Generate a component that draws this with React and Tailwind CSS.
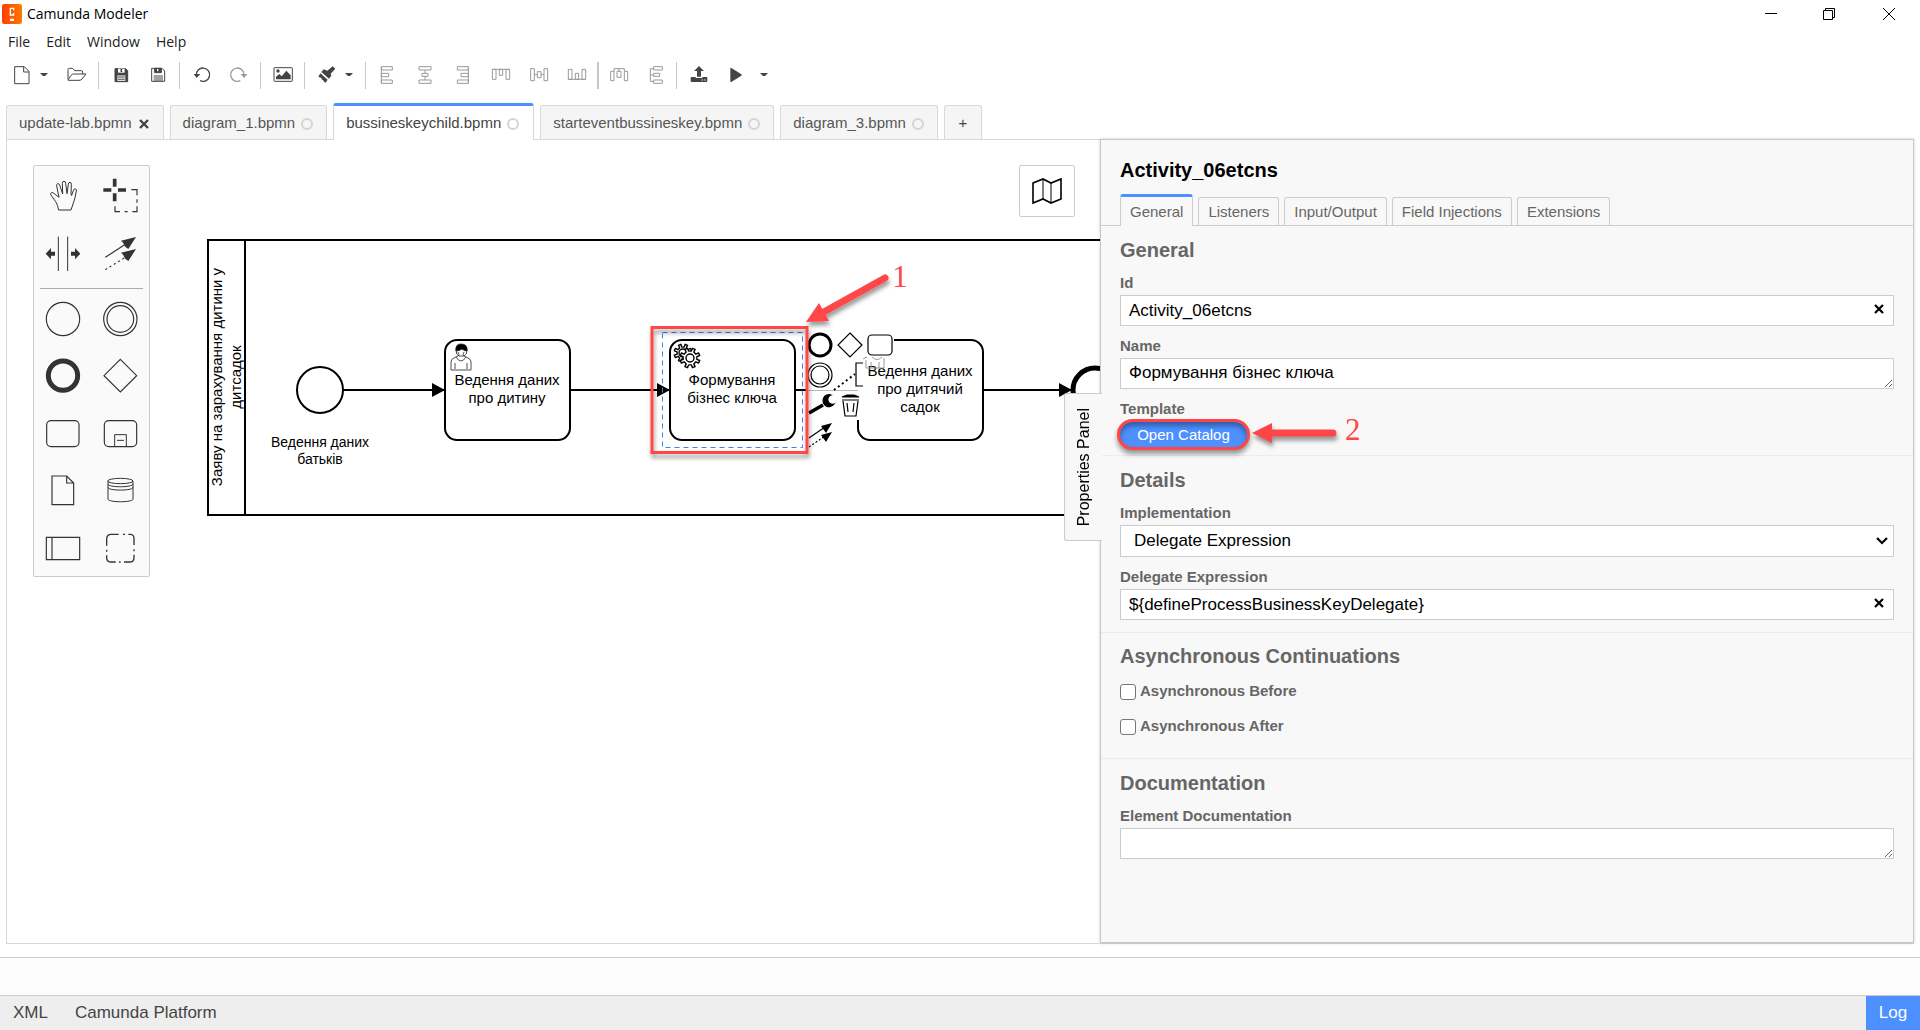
import React from "react";

const DARK = "#444";
const MUTED = "#999";

function ToolButton({ label, box, color = DARK, children }) {
  return (
    <button type="button" aria-label={label} title={label} className="flex h-9 w-[37px] items-center justify-center">
      <svg viewBox={box} className="size-[34px]" fill="none" stroke={color} strokeWidth="3">
        {children}
      </svg>
    </button>
  );
}

function Caret({ label, className = "" }) {
  return (
    <button type="button" aria-label={label} className={"flex h-9 w-[17px] items-center " + className}>
      <svg viewBox="0 0 8 4" className="h-1 w-2" fill={DARK}>
        <path d="M0 0h8L5 3H3z" />
      </svg>
    </button>
  );
}

function Group({ children, className = "px-[3px]" }) {
  return <div className={"flex items-center " + className}>{children}</div>;
}

function Sep() {
  return <div className="h-[27px] w-px bg-[#c8c8c8]" />;
}

function Toolbar() {
  return (
    <div className="flex h-[42px] items-center">
      <Group className="pr-1 pl-[3px]">
        <ToolButton label="Create new file" box="14 174 102 102">
          <path d="M43 200h29l14 14v37H43zM70 200v16h16" />
        </ToolButton>
        <Caret label="New file options" />
        <ToolButton label="Open file" box="177 174 102 102">
          <path d="M204 238v-29q0-4 4-4h10l6 7h20q4 0 4 4v6M204 240l9-14q3-4 8-4h37l-12 15q-3 4-9 4h-31q-3 0-2-1z" />
        </ToolButton>
      </Group>
      <Sep />
      <Group>
        <ToolButton label="Save" box="310 174 102 102">
          <path d="M343 206h32l6 6v33h-38z" fill={DARK} />
          <path d="M352 206h20v12h-20z" fill="#fff" stroke="none" />
          <path d="M362 207v9" strokeWidth="5" />
          <path d="M350 226h24v17h-24z" fill="#ddd" stroke="none" />
          <path d="M352 231h20M352 238h20" strokeWidth="2.5" />
        </ToolButton>
        <ToolButton label="Save as" box="422 174 102 102">
          <path d="M454 205h31l8 8v31h-39z" />
          <path d="M463 205h20v13h-20z" fill={DARK} />
          <path d="M472 207v7" stroke="#fff" strokeWidth="4" />
          <path d="M460 228h28M460 234h28M460 240h28" />
        </ToolButton>
      </Group>
      <Sep />
      <Group>
        <ToolButton label="Undo" box="555 174 102 102">
          <path d="M589 226a20 20 0 1 1 11 16" strokeWidth="4" />
          <path d="M581 222h20l-11 12z" fill={DARK} stroke="none" />
        </ToolButton>
        <ToolButton label="Redo" box="666 174 102 102" color={MUTED}>
          <path d="M732 226a20 20 0 1 0-11 16" strokeWidth="4" />
          <path d="M722 222h20l-10 12z" fill={MUTED} stroke="none" />
        </ToolButton>
      </Group>
      <Sep />
      <Group>
        <ToolButton label="Export as image" box="799 174 102 102">
          <rect x="823" y="203" width="55" height="41" rx="2" />
          <circle cx="835" cy="213" r="5" fill={DARK} stroke="none" />
          <path d="M829 238v-8l10-8 7 7 14-17 13 14v12z" fill={DARK} stroke="none" />
        </ToolButton>
      </Group>
      <Sep />
      <Group>
        <ToolButton label="Set element color" box="929 174 102 102">
          <path d="M997 199l8 7-14 15 2 6-7 9-23-20 7-8 11 4z" fill={DARK} stroke="none" />
          <path d="M960 220l22 19-6 9-5-3-3-5-3-1-2-5-9-4z" fill={DARK} stroke="none" />
        </ToolButton>
        <Caret label="Color options" />
      </Group>
      <Sep />
      <Group className="gap-px px-0.5">
        <ToolButton label="Align left" box="1111 174 102 102" color={MUTED}>
          <path d="M1145 200h33v10h-33zM1145 220h22v10h-22zM1145 240h33v10h-33zM1145 200v50" />
        </ToolButton>
        <ToolButton label="Align center" box="25 174 102 102" color={MUTED}>
          <path d="M58 200h36v10H58zM67 220h18v9H67zM58 240h36v10H58zM76 210v10M76 229v11" />
        </ToolButton>
        <ToolButton label="Align right" box="140 174 102 102" color={MUTED}>
          <path d="M174 200h33v10h-33zM185 220h22v10h-22zM174 240h33v10h-33zM207 200v50" />
        </ToolButton>
        <ToolButton label="Align top" box="250 174 102 102" color={MUTED}>
          <path d="M275 208h11v30h-11zM296 208h10v18h-10zM316 208h11v30h-11zM275 208h52" />
        </ToolButton>
        <ToolButton label="Align middle" box="362 174 102 102" color={MUTED}>
          <path d="M388 206h11v36h-11zM408 215h11v18h-11zM428 206h11v36h-11zM399 224h9M419 224h9" />
        </ToolButton>
        <ToolButton label="Align bottom" box="475 174 102 102" color={MUTED}>
          <path d="M500 208h11v30h-11zM521 220h10v18h-10zM541 208h11v30h-11zM500 238h52" />
        </ToolButton>
      </Group>
      <div className="h-[27px] w-0.5 bg-[#c8c8c8]" />
      <Group className="pr-0.5 pl-px">
        <ToolButton label="Distribute horizontally" box="606 174 102 102" color={MUTED}>
          <path d="M632 214h10v28h-10zM651 214h12v18h-12zM673 214h10v28h-10zM642 214v-8h31v8M657 206v8" />
        </ToolButton>
        <ToolButton label="Distribute vertically" box="718 174 102 102" color={MUTED}>
          <path d="M762 200h26v10h-26zM762 220h18v9h-18zM762 240h26v10h-26zM762 206h-10v38h10M752 225h10" />
        </ToolButton>
      </Group>
      <Sep />
      <Group>
        <ToolButton label="Deploy diagram" box="850 174 102 102">
          <path d="M901 198l15 15h-9v17h-12v-17h-9z" fill={DARK} stroke="none" />
          <path d="M876 234q0-3 3-3h12v3h20v-3h12q3 0 3 3v9q0 3-3 3h-44q-3 0-3-3z" fill={DARK} stroke="none" />
          <path d="M909 240h4M917 240h4" stroke="#fff" />
        </ToolButton>
        <ToolButton label="Start process instance" box="961 174 102 102">
          <path d="M995 205q0-3 3-1l30 19q3 2 0 4l-29 18q-4 2-4-2z" fill={DARK} stroke="none" />
        </ToolButton>
        <Caret label="Start options" className="ml-1.5" />
      </Group>
    </div>
  );
}

const FILES = [
  { name: "update-lab.bpmn", saved: true },
  { name: "diagram_1.bpmn" },
  { name: "bussineskeychild.bpmn", active: true },
  { name: "starteventbussineskey.bpmn" },
  { name: "diagram_3.bpmn" },
];

function FileTabs() {
  return (
    <div role="tablist" className="flex h-[43px] items-end gap-1.5 px-1.5 text-[15px] leading-[18px]">
      {FILES.map((f) => (
        <button
          key={f.name}
          type="button"
          role="tab"
          aria-selected={!!f.active}
          className={
            f.active
              ? "relative z-10 -mb-px flex h-[37px] items-center gap-1.5 rounded-t-[3px] border-x border-t-[3px] border-x-[#d8d8d8] border-t-[#4d90ff] bg-white pr-3.5 pl-3 text-[#444]"
              : "flex h-[34px] items-center gap-1.5 rounded-t-[3px] border border-b-0 border-[#d8d8d8] bg-[#f5f5f5] pr-[13px] pl-3 text-[#555]"
          }
        >
          <span>{f.name}</span>
          {f.saved ? (
            <svg viewBox="0 0 12 12" className="mt-0.5 size-3" stroke="#444" strokeWidth="2.4">
              <path d="M2 2l8 8M10 2l-8 8" />
            </svg>
          ) : (
            <span className="mt-0.5 size-3 rounded-full border-2 border-[#d4d4d4]" />
          )}
        </button>
      ))}
      <button type="button" aria-label="New tab" className="h-[34px] w-[38px] rounded-t-[3px] border border-b-0 border-[#d8d8d8] bg-[#f5f5f5] text-[#444]">
        +
      </button>
    </div>
  );
}

function PaletteEntry({ label, box, children }) {
  return (
    <button type="button" aria-label={label} title={label} className="flex items-center justify-center">
      <svg viewBox={box} className="size-[38px]" fill="none" stroke="#333" strokeWidth="3.5">
        {children}
      </svg>
    </button>
  );
}

function Palette() {
  return (
    <div className="absolute top-[25px] left-[26px] w-[117px] rounded-[2px] border border-[#ccc] bg-[#fafafa]">
      <div className="grid h-[116px] grid-cols-2 grid-rows-2">
        <PaletteEntry label="Hand tool" box="133 78 114 114">
          <path strokeWidth="3" strokeLinejoin="round" d="M177 180h37l6-18q3-8 6-19l4-20q1-6-3-6-5-1-6 5l-5 14 -2-1 1-32q0-6-4-6-5 0-5 6l-4 28-4-31q0-6-5-6t-5 6l1 32-9-27q-2-5-6-4t-3 7l7 34-14-11q-5-5-9-3t-1 7l14 20q6 9 9 25z" />
        </PaletteEntry>
        <PaletteEntry label="Lasso tool" box="303 78 114 114">
          <path strokeWidth="11" d="M310 120h24M354 120h24M344 86v24M344 130v24" />
          <path d="M394 119h17v17M411 148v10M411 169v16h-14M383 185h-9M360 185h-15v-16" />
        </PaletteEntry>
        <PaletteEntry label="Space tool" box="132 252 114 114">
          <path strokeWidth="3" d="M175 260v103M203 260v103" />
          <path fill="#333" stroke="none" d="M137 311l16-17v11h12v12h-12v11zM241 311l-16-17v11h-12v12h12v11z" />
        </PaletteEntry>
        <PaletteEntry label="Connect tool" box="303 252 114 114">
          <path d="M316 322l60-39" />
          <path strokeDasharray="6 9" d="M316 359l60-37" />
          <path fill="#333" stroke="none" d="M408 261l-45 11q8 6 9 12 3 8 13 13zM408 297l-45 11q8 6 9 12 3 8 13 13z" />
        </PaletteEntry>
      </div>
      <hr className="mx-1.5 mt-1.5 mb-px border-[#aaa]" />
      <div className="grid h-[286px] grid-cols-2 grid-rows-5">
        <PaletteEntry label="Start event" box="132 449 114 114">
          <circle cx="189" cy="506" r="50" />
        </PaletteEntry>
        <PaletteEntry label="Intermediate event" box="303 449 114 114">
          <circle cx="361" cy="506" r="50" />
          <circle cx="361" cy="506" r="40" />
        </PaletteEntry>
        <PaletteEntry label="End event" box="132 621 114 114">
          <circle cx="189" cy="677" r="44" strokeWidth="15" />
        </PaletteEntry>
        <PaletteEntry label="Gateway" box="303 621 114 114">
          <path d="M361 628l49 49-49 49-49-49z" />
        </PaletteEntry>
        <PaletteEntry label="Task" box="132 792 114 114">
          <rect x="140" y="812" width="97" height="78" rx="13" />
        </PaletteEntry>
        <PaletteEntry label="Expanded sub-process" box="303 792 114 114">
          <rect x="313" y="812" width="97" height="78" rx="13" />
          <path strokeWidth="3" d="M344 889v-35h35v35M351 871h21" />
        </PaletteEntry>
        <PaletteEntry label="Data object" box="132 964 114 114">
          <path d="M156 979h44l21 21v65h-65zM200 979v21h21" />
        </PaletteEntry>
        <PaletteEntry label="Data store" box="303 964 114 114">
          <path strokeWidth="3" d="M324 995v53c0 11 75 11 75 0v-53" />
          <ellipse cx="361" cy="994" rx="38" ry="8" strokeWidth="3" />
          <path strokeWidth="3" d="M324 1003c0 11 75 11 75 0M324 1013c0 11 75 11 75 0" />
        </PaletteEntry>
        <PaletteEntry label="Pool" box="132 1135 114 114">
          <path d="M139 1163h100v67H139zM156 1163v67" />
        </PaletteEntry>
        <PaletteEntry label="Group" box="303 1135 114 114">
          <path strokeWidth="4" d="M320 1188v-20q0-14 14-14h22M369 1154h6M385 1154h5q12 0 12 12v20M402 1199v6M402 1215v9q0 13-13 13h-17M362 1237h-5M347 1237h-13q-14 0-14-13v-7M320 1206v-6" />
        </PaletteEntry>
      </div>
    </div>
  );
}

function gearPath(cx, cy, outer, inner, teeth) {
  const step = (Math.PI * 2) / teeth;
  const pts = [];
  for (let i = 0; i < teeth; i++) {
    const a = i * step + step / 2;
    [
      [-0.24, inner],
      [-0.18, outer],
      [0.18, outer],
      [0.24, inner],
    ].forEach(([o, r]) => {
      const t = a + o * step;
      pts.push((cx + r * Math.cos(t)).toFixed(1) + " " + (cy + r * Math.sin(t)).toFixed(1));
    });
  }
  return "M" + pts.join("L") + "z";
}

function UserIcon({ x, y }) {
  return (
    <g transform={`translate(${x} ${y})`} fill="none" stroke="#222" strokeWidth="0.8">
      <path d="M1 26v-8q0-3 3-4l4-2q2-1 0-4M21 26v-8q0-3-3-4l-4-2q-2-1 0-4M1 26h20M5 25v-6M17 25v-6M6 13q5 8 10 0" />
      <path d="M6 6q0-5 5-5t6 5q0 5-3 6h-5q-3-1-3-6" />
      <path d="M6 7q-1-7 5-7 7 0 6 7-3 0-5-2-3 2-6 2z" fill="#000" />
    </g>
  );
}

function Diagram() {
  return (
    <svg className="absolute inset-0 h-full w-full" fontFamily='"Liberation Sans", Arial, sans-serif' fontSize="15" textAnchor="middle">
      <defs>
        <marker id="flow" viewBox="0 0 14 14" refX="13" refY="7" markerWidth="14" markerHeight="14" markerUnits="userSpaceOnUse" orient="auto">
          <path d="M0 0L13 7L0 14z" />
        </marker>
        <filter id="soft" x="-20%" y="-20%" width="150%" height="150%">
          <feDropShadow dx="1" dy="4" stdDeviation="2" floodOpacity="0.4" />
        </filter>
      </defs>
      <g transform="translate(-7 -140)">
        <g fill="none" stroke="#000" strokeWidth="2">
          <rect x="208" y="240" width="1000" height="275" />
          <path d="M245 240v275" />
          <circle cx="320" cy="390" r="23" />
          <rect x="445" y="340" width="125" height="100" rx="12" />
          <rect x="670" y="340" width="125" height="100" rx="12" />
          <rect x="858" y="340" width="125" height="100" rx="12" />
          <path d="M344 390h101" markerEnd="url(#flow)" />
          <path d="M571 390h99" markerEnd="url(#flow)" />
          <path d="M796 390h12" />
          <circle cx="1095" cy="390" r="22" strokeWidth="5" />
          <path d="M984 390h88" markerEnd="url(#flow)" />
        </g>

        <text transform="translate(222 377) rotate(-90)">Заяву на зарахування дитини у</text>
        <text transform="translate(241 377) rotate(-90)">дитсадок</text>
        <text x="320" y="447" fontSize="14">Ведення даних</text>
        <text x="320" y="464" fontSize="14">батьків</text>
        <text x="507" y="385">Ведення даних</text>
        <text x="507" y="403">про дитину</text>
        <text x="732" y="385">Формування</text>
        <text x="732" y="403">бізнес ключа</text>
        <text x="920" y="376">Ведення даних</text>
        <text x="920" y="394">про дитячий</text>
        <text x="920" y="412">садок</text>

        <UserIcon x="450" y="344" />

        <g fill="#fff" stroke="#000" strokeWidth="1.4" strokeLinejoin="round">
          <path d={gearPath(683, 353, 9, 6, 8)} />
          <circle cx="683" cy="353" r="4" />
          <path d={gearPath(690, 358, 10, 7, 8)} />
          <circle cx="690" cy="358" r="4" />
        </g>

        {/* Context pad over the neighbouring task */}
        <g fill="#fff">
          <rect x="809" y="331" width="85" height="27" />
          <rect x="809" y="358" width="54" height="62" />
          <rect x="863" y="358" width="22" height="8" />
        </g>
        <g fill="none" stroke="#999" strokeWidth="1">
          <path d="M808 390.500h50" stroke="#bbb" />
          <path d="M866 360v8h18v-10M871 368v-6M879 368v-6M872 357q5 5 10 0M863 359l4-2" />
        </g>
        <g fill="none" stroke="#000" strokeWidth="1.200">
          <circle cx="820" cy="345" r="11" strokeWidth="3" />
          <path d="M850 333l12 12-12 12-12-12z" />
          <rect x="868" y="335" width="24" height="20" rx="4" />
          <circle cx="820" cy="375" r="12" />
          <circle cx="820" cy="375" r="9" />
          <path d="M863 363h-7v23h7" />
          <path d="M834 390l21-16" strokeWidth="2" strokeDasharray="2 3" />
          <path d="M809 413l14-8" strokeWidth="3.5" />
          <path d="M831 395A6 6 0 1 0 834 404A4.500 4.500 0 1 1 831 395z" fill="#000" />
          <path d="M842 400h17M843 401l2 15h11l2-15M847 403l1 9M854 403l-1 9" />
          <path d="M842 397l5-2h7l5 2z" fill="#000" />
          <path d="M809 438l16-11" />
          <path d="M809 447l16-11" strokeDasharray="2 2" />
          <path d="M832 423l-11 3 5 7zM832 432l-11 3 5 7z" fill="#000" stroke="none" />
        </g>

        <rect x="662.5" y="332.5" width="140" height="115" fill="none" stroke="#3b82f0" strokeDasharray="5 4" />

        <g filter="url(#soft)">
          <rect x="652" y="327.5" width="155" height="125" fill="none" stroke="#ff4646" strokeWidth="3" />
        </g>
        <g filter="url(#soft)" fill="#ff4646">
          <path d="M885 278L822 313" stroke="#ff4646" strokeWidth="7" strokeLinecap="round" />
          <path d="M806 322L819 303L829 321z" />
        </g>
        <text x="900" y="287" fontSize="31" fill="#ff4646" fontFamily='"Liberation Serif", serif'>1</text>
      </g>
    </svg>
  );
}

function Canvas() {
  return (
    <section aria-label="Diagram" className="relative min-w-0 flex-1 overflow-hidden bg-white">
      <Diagram />
      <Palette />
      <button
        type="button"
        aria-label="Toggle minimap"
        className="absolute top-[25px] right-[25px] flex h-[52px] w-14 items-center justify-center rounded-[2px] border border-[#ccc] bg-white"
      >
        <svg viewBox="0 0 32 28" className="h-7 w-8" fill="none" stroke="#000" strokeWidth="1.6">
          <path d="M2 6l10-4 8 4 10-4v20l-10 4-8-4-10 4z" />
          <path d="M12 2v20M20 6v20" strokeWidth="1" />
        </svg>
      </button>
    </section>
  );
}

const HEADING = "text-[20px] leading-6 font-bold text-[#666]";
const LABEL = "block text-[15px] leading-[18px] font-bold text-[#666]";
const FIELD = "block h-[31px] w-full border border-[#ccc] bg-white text-[17px] leading-[22px] text-black outline-none";

function TextField({ id, label, value }) {
  return (
    <div>
      <label htmlFor={id} className={LABEL}>{label}</label>
      <div className="relative mt-[3px]">
        <input id={id} type="text" defaultValue={value} className={FIELD + " pr-8 pl-2"} />
        <button type="button" aria-label={"Clear " + label} className="absolute inset-y-0 right-1 flex w-[22px] items-center justify-center">
          <svg viewBox="0 0 10 10" className="mb-1 size-2.5" stroke="#000" strokeWidth="2.2">
            <path d="M1 1l8 8M9 1L1 9" />
          </svg>
        </button>
      </div>
    </div>
  );
}

function AreaField({ id, label, value }) {
  return (
    <div>
      <label htmlFor={id} className={LABEL}>{label}</label>
      <textarea id={id} rows={1} defaultValue={value} className={FIELD + " mt-[3px] overflow-hidden px-2 pt-[3px]"} />
    </div>
  );
}

function Check({ id, label }) {
  return (
    <div className="flex items-start gap-1">
      <input
        id={id}
        type="checkbox"
        className="mt-0.5 size-4 appearance-none rounded-[3px] border border-[#767676] bg-white checked:bg-[#4d90ff]"
      />
      <label htmlFor={id} className={LABEL}>{label}</label>
    </div>
  );
}

function PropertiesPanel() {
  return (
    <aside className="relative -mt-px -mr-px w-[814px] shrink-0 border border-[#c8c8c8] bg-[#f8f8f8] shadow-[0_0_3px_rgba(0,0,0,0.2)]">
      <button
        type="button"
        className="absolute top-[253px] -left-[37px] flex h-[148px] w-[38px] items-center justify-center rounded-l-[3px] border border-r-0 border-[#ccc] bg-[#f8f8f8] text-[16px] leading-5 text-black"
      >
        <span className="rotate-180 [writing-mode:vertical-rl]">Properties Panel</span>
      </button>

      <h1 className="px-[19px] pt-[18px] text-[20px] leading-6 font-bold text-black">Activity_06etcns</h1>
      <div role="tablist" className="mt-3 flex h-8 items-end gap-[5px] border-b border-[#ccc] px-[19px] text-[15px] leading-[18px] text-[#666]">
        <button type="button" role="tab" aria-selected="true" className="-mb-px h-8 rounded-t-[3px] border-x border-t-[3px] border-x-[#ccc] border-t-[#4d90ff] bg-[#f8f8f8] px-[9px]">
          General
        </button>
        {["Listeners", "Input/Output", "Field Injections", "Extensions"].map((t) => (
          <button key={t} type="button" role="tab" aria-selected="false" className="h-7 rounded-t-[3px] border border-b-0 border-[#ccc] px-[9px]">
            {t}
          </button>
        ))}
      </div>

      <section className="border-b border-[#ececec] px-[19px] pt-3 pb-[5px]">
        <h2 className={HEADING}>General</h2>
        <div className="mt-3 flex flex-col gap-[11px]">
          <TextField id="element-id" label="Id" value="Activity_06etcns" />
          <AreaField id="element-name" label="Name" value="Формування бізнес ключа" />
          <div>
            <p className={LABEL}>Template</p>
            <div className="-ml-[3px] flex items-center gap-px pt-px">
              <button
                type="button"
                className="h-[31px] w-[133px] rounded-full border-[3px] border-[#ff4646] bg-[#4d90ff] text-[15px] leading-[18px] text-white shadow-[0_4px_5px_rgba(0,0,0,0.4),inset_0_4px_5px_rgba(0,0,0,0.35)]"
              >
                Open Catalog
              </button>
              <svg viewBox="0 0 86 30" className="-my-1 h-[30px] w-[86px] overflow-visible" fill="#ff4646">
                <g className="drop-shadow-[1px_4px_2px_rgba(0,0,0,0.4)]">
                  <path d="M1 13L21 3v20z" />
                  <path d="M19 13h63" stroke="#ff4646" strokeWidth="7" strokeLinecap="round" />
                </g>
              </svg>
              <span className="-mt-2.5 h-6 pl-[7px] font-['Liberation_Serif',serif] text-[31px] leading-6 text-[#ff4646]">2</span>
            </div>
          </div>
        </div>
      </section>

      <section className="border-b border-[#ececec] px-[19px] pt-3 pb-3">
        <h2 className={HEADING}>Details</h2>
        <div className="mt-3 flex flex-col gap-[11px]">
          <div>
            <label htmlFor="implementation" className={LABEL}>Implementation</label>
            <div className="relative mt-[3px]">
              <select id="implementation" defaultValue="delegate" className="block h-8 w-full appearance-none border border-[#ccc] bg-white pl-[13px] text-[17px] leading-[22px] text-black outline-none">
                <option value="delegate">Delegate Expression</option>
              </select>
              <svg viewBox="0 0 12 8" className="pointer-events-none absolute top-3 right-1.5 h-2 w-3" fill="none" stroke="#000" strokeWidth="2.200">
                <path d="M1 1l5 5 5-5" />
              </svg>
            </div>
          </div>
          <TextField id="delegate-expression" label="Delegate Expression" value="${defineProcessBusinessKeyDelegate}" />
        </div>
      </section>

      <section className="border-b border-[#ececec] px-[19px] pt-[11px] pb-[23px]">
        <h2 className={HEADING}>Asynchronous Continuations</h2>
        <div className="mt-[14px] flex flex-col gap-[17px]">
          <Check id="async-before" label="Asynchronous Before" />
          <Check id="async-after" label="Asynchronous After" />
        </div>
      </section>

      <section className="px-[19px] pt-3">
        <h2 className={HEADING + " mb-3"}>Documentation</h2>
        <AreaField id="element-documentation" label="Element Documentation" value="" />
      </section>
    </aside>
  );
}

function TitleBar() {
  return (
    <header className="flex h-7 items-center justify-between pl-0.5 font-['Open_Sans','Noto_Sans',sans-serif] text-black">
      <div className="flex items-center gap-[5px]">
        <svg viewBox="0 0 60 60" className="size-5">
          <defs>
            <linearGradient id="logo" x1="0" y1="0" x2="1" y2="0">
              <stop offset="0" stopColor="#ff3d00" />
              <stop offset="1" stopColor="#ff7a00" />
            </linearGradient>
          </defs>
          <rect width="60" height="60" rx="7" fill="url(#logo)" />
          <path d="M35 19v-6H25v20h10v-6" fill="none" stroke="#fff" strokeWidth="4" />
          <path d="M24 44h12v7H24z" fill="#fff" />
        </svg>
        <span className="text-[14px] leading-5">Camunda Modeler</span>
      </div>
      <div className="flex">
        <button type="button" aria-label="Minimize" className="flex h-7 w-[58px] items-center justify-center">
          <svg viewBox="0 0 12 12" className="size-3" stroke="#000"><path d="M0 5.500h12" /></svg>
        </button>
        <button type="button" aria-label="Restore" className="flex h-7 w-[58px] items-center justify-center">
          <svg viewBox="0 0 12 12" className="size-3" fill="none" stroke="#000">
            <path d="M.5 2.500h9v9h-9zM2.500 2.500v-2h9v9h-2" />
          </svg>
        </button>
        <button type="button" aria-label="Close" className="flex h-7 w-[62px] items-center justify-center">
          <svg viewBox="0 0 12 12" className="size-3" stroke="#000"><path d="M0 0l12 12M12 0L0 12" /></svg>
        </button>
      </div>
    </header>
  );
}

export default function App() {
  return (
    <div className="flex min-h-screen flex-col bg-white font-['Liberation_Sans',Arial,sans-serif]">
      <TitleBar />
      <nav aria-label="Main menu" className="flex h-[26px] items-center gap-4 px-2 pt-px font-['Open_Sans','Noto_Sans',sans-serif] text-[14px] leading-5 text-[#222]">
        {["File", "Edit", "Window", "Help"].map((m) => (
          <button key={m} type="button">{m}</button>
        ))}
      </nav>
      <Toolbar />
      <FileTabs />
      <main className="mx-1.5 flex flex-1 border border-[#d8d8d8]">
        <Canvas />
        <PropertiesPanel />
      </main>
      <div className="mt-[13px] h-[38px] border-t border-[#ccc] bg-[#fcfcfc]" />
      <footer className="flex h-[35px] items-stretch justify-between border-t border-[#ccc] bg-[#eee] text-[17px] text-[#444]">
        <div className="flex gap-[27px] pl-[13px]">
          <button type="button">XML</button>
          <button type="button">Camunda Platform</button>
        </div>
        <button type="button" className="w-[54px] bg-[#4d90ff] text-white">Log</button>
      </footer>
    </div>
  );
}
